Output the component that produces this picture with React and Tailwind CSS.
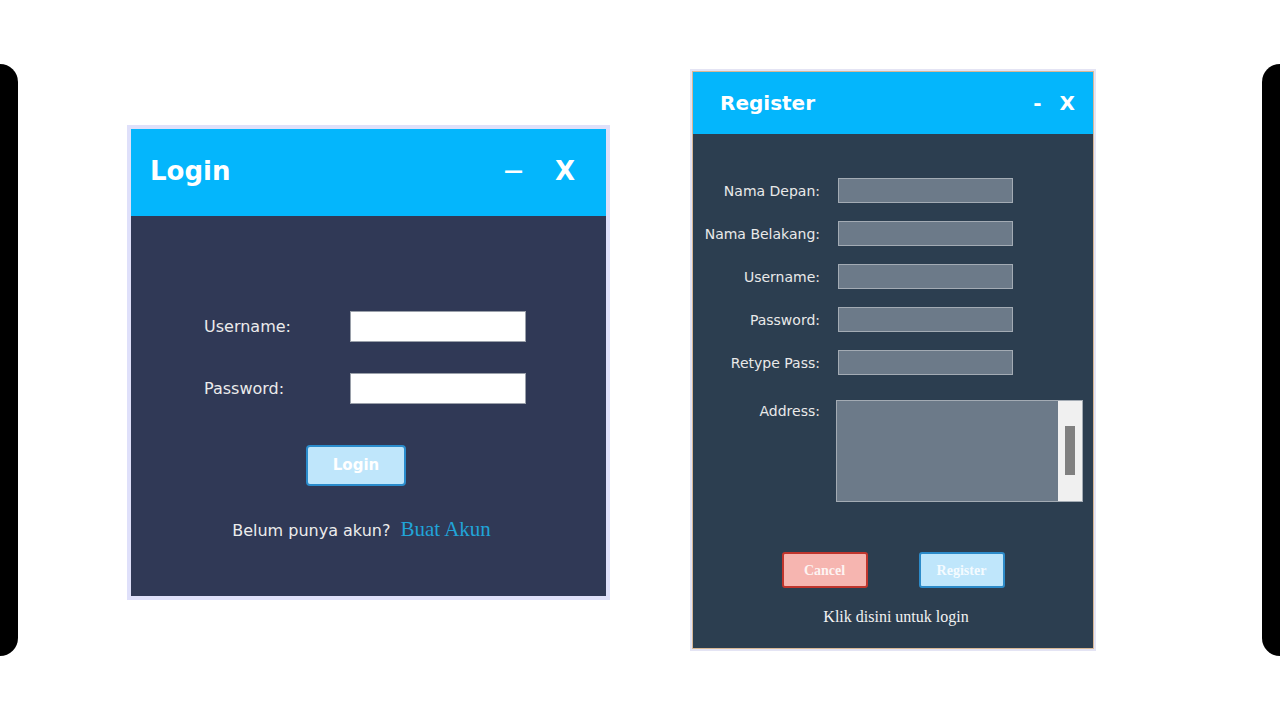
import React from "react";

const SANS = { fontFamily: '"DejaVu Sans", Verdana, sans-serif' };
const SERIF = { fontFamily: '"Liberation Serif", "Times New Roman", serif' };

function LoginWindow() {
  return (
    <div className="mt-[125px] ml-[109px] w-[483px] h-[475px] p-[4px] bg-[#dfe0fa]">
      <div className="flex flex-col h-full">
        <header className="h-[87px] bg-[#04b6fc] flex items-center px-[19px] pb-[4px] text-white" style={SANS}>
          <h1 className="text-[26px] font-bold leading-none">Login</h1>
          <span className="ml-auto text-[19px] font-bold leading-none">—</span>
          <span className="ml-[32px] mr-[12px] text-[26px] font-bold leading-none">X</span>
        </header>
        <div className="flex-1 bg-[#303956] flex flex-col pt-[95px]" style={SANS}>
          <div className="flex items-center pl-[73px]">
            <label className="w-[146px] text-[16px] text-[#ebebeb]">Username:</label>
            <div className="w-[176px] h-[31px] bg-white border border-[#9aa0aa]"></div>
          </div>
          <div className="flex items-center pl-[73px] mt-[31px]">
            <label className="w-[146px] text-[16px] text-[#ebebeb]">Password:</label>
            <div className="w-[176px] h-[31px] bg-white border border-[#9aa0aa]"></div>
          </div>
          <div className="flex justify-center mt-[41px] pr-[25px]">
            <button className="w-[100px] h-[41px] border-2 border-[#2a8ccc] bg-[#bfe6fb] rounded-[4px] text-[15px] font-bold text-white">
              Login
            </button>
          </div>
          <p className="mt-[31px] text-center leading-[24px] pr-[14px]">
            <span className="text-[16px] text-[#ececec]">Belum punya akun?</span>
            <span className="ml-[10px] text-[21px] text-[#21a4d8]" style={SERIF}>Buat Akun</span>
          </p>
        </div>
      </div>
    </div>
  );
}

function Field({ label, first }) {
  return (
    <div className={"flex items-center h-[25px]" + (first ? "" : " mt-[18px]")}>
      <label className="w-[127px] shrink-0 text-right whitespace-nowrap text-[14px] leading-[25px] pt-[2px] text-[#e9e9e9]">{label}</label>
      <div className="ml-[18px] w-[175px] h-[25px] bg-[#6c7a89] border border-[#a3abb4]"></div>
    </div>
  );
}

function RegisterWindow() {
  return (
    <div className="mt-[69px] ml-[80px] w-[406px] h-[582px] p-[2px] bg-[#e4e4f4]">
      <div className="flex flex-col h-full border border-[#d9b896]">
        <header className="h-[62px] bg-[#04b6fc] flex items-center pl-[27px] pr-[18px] text-white" style={SANS}>
          <h1 className="text-[20px] font-bold leading-none">Register</h1>
          <span className="ml-auto text-[20px] font-bold leading-none">-</span>
          <span className="ml-[18px] text-[20px] font-bold leading-none">X</span>
        </header>
        <div className="flex-1 bg-[#2c3e50] flex flex-col pt-[44px]" style={SANS}>
          <Field label="Nama Depan:" first />
          <Field label="Nama Belakang:" />
          <Field label="Username:" />
          <Field label="Password:" />
          <Field label="Retype Pass:" />
          <div className="flex items-start mt-[25px]">
            <label className="w-[127px] shrink-0 text-right text-[14px] leading-[22px] text-[#e9e9e9]">Address:</label>
            <div className="ml-[16px] w-[247px] h-[102px] flex border border-[#a3abb4]">
              <div className="flex-1 bg-[#6c7a89]"></div>
              <div className="w-[24px] bg-[#f0f0f0] flex justify-center">
                <div className="mt-[25px] w-[10px] h-[49px] bg-[#808080]"></div>
              </div>
            </div>
          </div>
          <div className="flex justify-center gap-[51px] mt-[50px]" style={SERIF}>
            <button className="w-[86px] h-[36px] border-2 border-[#c0352d] bg-[#f6b5b0] rounded-[3px] text-[14px] font-bold text-[#fdf3f2]">
              Cancel
            </button>
            <button className="w-[86px] h-[36px] border-2 border-[#2d8bc9] bg-[#bfe6fb] rounded-[3px] text-[14px] font-bold text-[#f4fbff]">
              Register
            </button>
          </div>
          <p className="mt-[19px] text-center text-[16px] leading-[20px] text-[#f2f2f2] pl-[6px]" style={SERIF}>
            Klik disini untuk login
          </p>
        </div>
      </div>
    </div>
  );
}

export default function App() {
  return (
    <div className="w-full h-[720px] bg-white flex items-start overflow-hidden">
      <div className="mt-[64px] w-[18px] h-[592px] bg-black rounded-r-[18px] shrink-0"></div>
      <LoginWindow />
      <RegisterWindow />
      <div className="ml-auto mt-[64px] w-[18px] h-[592px] bg-black rounded-l-[18px] shrink-0"></div>
    </div>
  );
}
